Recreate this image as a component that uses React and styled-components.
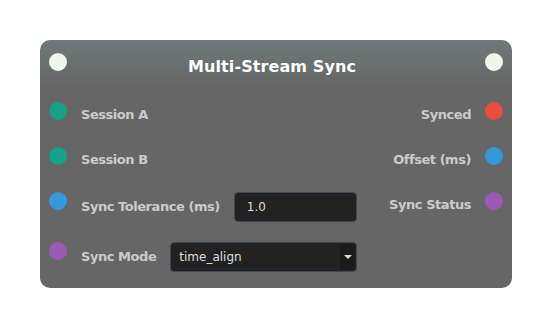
import React from "react";
import styled, { createGlobalStyle } from "styled-components";

const Global = createGlobalStyle`
  html, body { margin: 0; padding: 0; background: #ffffff; }
  body { font-family: "DejaVu Sans", "Liberation Sans", sans-serif; }
  * { box-sizing: border-box; }
`;

const Page = styled.div`
  padding: 40px;
`;

const Node = styled.div`
  width: 472px;
  height: 248px;
  border-radius: 10px;
  background: linear-gradient(to bottom, #6f7979 0px, #676868 42px, #666666 48px);
  display: flex;
  flex-direction: column;
  padding: 0 9px 16px;
`;

const Header = styled.div`
  display: flex;
  align-items: flex-start;
  padding-top: 13px;
`;

const Title = styled.div`
  flex: 1;
  text-align: center;
  font-weight: bold;
  font-size: 16px;
  line-height: 28px;
  color: #ffffff;
  letter-spacing: 0.1px;
  padding-right: 8px;
`;

const Dot = styled.span`
  width: 18px;
  height: 18px;
  border-radius: 50%;
  flex: none;
  background: ${(p) => p.$color};
`;

const Body = styled.div`
  display: grid;
  grid-template-columns: 308px 1fr;
  padding-top: 21px;
`;

const Column = styled.div`
  display: flex;
  flex-direction: column;
  gap: 19px;
`;

const Row = styled.div`
  display: flex;
  align-items: flex-start;
  justify-content: ${(p) => (p.$right ? "flex-end" : "flex-start")};
  gap: 14px;
  height: ${(p) => (p.$tall ? "30px" : "26px")};
`;

const Label = styled.span`
  font-weight: bold;
  font-size: 13px;
  letter-spacing: -0.45px;
  color: #cbcbcb;
  line-height: ${(p) => (p.$tall ? "30px" : "26px")};
  white-space: nowrap;
`;

const TextInput = styled.input`
  flex: 1;
  min-width: 0;
  height: 30px;
  background: #222222;
  border: 1px solid #3b4a5b;
  border-radius: 4px;
  color: #dddddd;
  font-family: "DejaVu Sans", sans-serif;
  font-size: 12px;
  padding: 0 12px;
  outline: none;
`;

const Select = styled.div`
  flex: 1;
  min-width: 0;
  height: 30px;
  background: #222222;
  border: 1px solid #3b4a5b;
  border-radius: 4px;
  display: flex;
  align-items: stretch;
  overflow: hidden;
`;

const SelectText = styled.span`
  flex: 1;
  color: #dddddd;
  font-size: 12px;
  line-height: 28px;
  padding-left: 8px;
`;

const Arrow = styled.span`
  width: 15px;
  background: #1b1b1b;
  display: flex;
  align-items: center;
  justify-content: center;
  margin: 1px 1px 1px 0;
`;

const Triangle = styled.span`
  width: 0;
  height: 0;
  border-left: 4px solid transparent;
  border-right: 4px solid transparent;
  border-top: 4px solid #d8d8d8;
`;

const COLORS = {
  white: "#eef8ec",
  teal: "#16a085",
  blue: "#3498db",
  purple: "#9b59b6",
  red: "#e74c3c",
};

export default function App() {
  return (
    <Page>
      <Global />
      <Node>
        <Header>
          <Dot $color={COLORS.white} />
          <Title>Multi-Stream Sync</Title>
          <Dot $color={COLORS.white} />
        </Header>
        <Body>
          <Column>
            <Row>
              <Dot $color={COLORS.teal} />
              <Label>Session A</Label>
            </Row>
            <Row>
              <Dot $color={COLORS.teal} />
              <Label>Session B</Label>
            </Row>
            <Row $tall>
              <Dot $color={COLORS.blue} />
              <Label $tall>Sync Tolerance (ms)</Label>
              <TextInput defaultValue="1.0" />
            </Row>
            <Row $tall style={{ marginTop: 1 }}>
              <Dot $color={COLORS.purple} />
              <Label $tall>Sync Mode</Label>
              <Select>
                <SelectText>time_align</SelectText>
                <Arrow>
                  <Triangle />
                </Arrow>
              </Select>
            </Row>
          </Column>
          <Column>
            <Row $right>
              <Label>Synced</Label>
              <Dot $color={COLORS.red} />
            </Row>
            <Row $right>
              <Label>Offset (ms)</Label>
              <Dot $color={COLORS.blue} />
            </Row>
            <Row $right>
              <Label>Sync Status</Label>
              <Dot $color={COLORS.purple} />
            </Row>
          </Column>
        </Body>
      </Node>
    </Page>
  );
}
